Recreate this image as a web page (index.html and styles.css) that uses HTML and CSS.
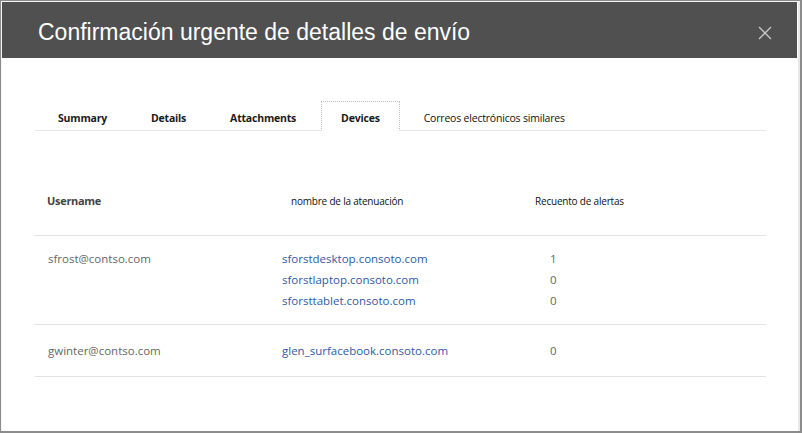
FILE: index.html
```html
<!DOCTYPE html>
<html>
<head>
<meta charset="utf-8">
<link rel="stylesheet" href="styles.css">
</head>
<body>
<div class="window">
  <div class="dialog">
    <div class="main">
      <header class="titlebar">
        <h1 class="title">Confirmación urgente de detalles de envío</h1>
        <button class="close" aria-label="Cerrar">
          <svg width="14" height="14" viewBox="0 0 14 14"><path d="M1 1 L13 13 M13 1 L1 13" stroke="#c8c8c8" stroke-width="1.3" fill="none"/></svg>
        </button>
      </header>
      <div class="content">
        <nav class="tabs">
          <span class="tab bold">Summary</span>
          <span class="tab bold">Details</span>
          <span class="tab bold">Attachments</span>
          <span class="tab bold active">Devices</span>
          <span class="tab">Correos electrónicos similares</span>
        </nav>
        <div class="table">
          <div class="row head">
            <div class="c1 h-user">Username</div>
            <div class="c2 h-dev">nombre de la atenuación</div>
            <div class="c3 h-count">Recuento de alertas</div>
          </div>
          <div class="row">
            <div class="c1 user">sfrost@contso.com</div>
            <div class="c2 links">
              <a>sforstdesktop.consoto.com</a>
              <a>sforstlaptop.consoto.com</a>
              <a>sforsttablet.consoto.com</a>
            </div>
            <div class="c3 counts">
              <span>1</span><span>0</span><span>0</span>
            </div>
          </div>
          <div class="row">
            <div class="c1 user">gwinter@contso.com</div>
            <div class="c2 links">
              <a>glen_surfacebook.consoto.com</a>
            </div>
            <div class="c3 counts">
              <span>0</span>
            </div>
          </div>
        </div>
      </div>
    </div>
    <div class="scrollbar"></div>
  </div>
</div>
</body>
</html>
```

FILE: styles.css
```css
* { box-sizing: border-box; }
html, body { margin: 0; padding: 0; background: #fff; }
body { width: 802px; height: 433px; overflow: hidden; font-family: "Open Sans", "Noto Sans", sans-serif; }

.window {
  width: 802px;
  height: 433px;
  border: 1px solid #8c8c8c;
  border-right-width: 2px;
  border-bottom-width: 2px;
  padding: 1px 0 0 1px;
  background: #f4f4f4;
}
.dialog {
  display: flex;
  height: 100%;
  background: #fff;
}
.main { flex: 1; display: flex; flex-direction: column; }
.scrollbar {
  width: 3px;
  border-left: 1px solid #fff;
  background: #e8e8e8;
}

.titlebar {
  height: 56px;
  background: #505050;
  display: flex;
  align-items: center;
  justify-content: space-between;
  padding: 0 25px 0 36px;
}
.title {
  margin: 0;
  color: #fff;
  font-family: "Liberation Sans", Arial, sans-serif;
  font-weight: normal;
  font-size: 23px;
  line-height: 1;
  padding-top: 4px;
}
.close {
  border: 0;
  background: none;
  padding: 0;
  width: 14px;
  height: 14px;
  display: flex;
  margin-top: 6px;
}

.content { padding: 43px 31px 0 33px; }

.tabs {
  display: flex;
  border-bottom: 1px solid #e6e6e6;
  height: 30px;
}
.tab {
  font-size: 10.5px;
  color: #111;
  padding: 2px 21px 0;
  border: 1px solid transparent;
  border-bottom: 0;
  line-height: 28px;
  letter-spacing: -0.2px;
}
.tab:first-child { padding-left: 22px; }
.tab.bold { font-weight: bold; color: #1a1a1a; }
.tab.active {
  border: 1px dotted #bdbdbd;
  border-bottom: 1px solid #fff;
  margin-bottom: -1px;
  padding: 2px 19px 0;
  margin-left: 3px;
  margin-right: 2px;
}

.row {
  display: grid;
  grid-template-columns: 247px 253px 1fr;
  border-bottom: 1px solid #e3e3e3;
  padding: 12px 0 13px;
  font-size: 11.5px;
  line-height: 21px;
}
.row:last-child { padding: 15px 0 15px; }
.row.head {
  padding: 63px 0 27px;
  line-height: 14px;
  font-size: 10px;
}
.h-user { padding-left: 12px; font-weight: bold; color: #444; font-size: 11px; letter-spacing: -0.3px; }
.h-dev { padding-left: 9px; color: #111; letter-spacing: -0.2px; }
.h-count { color: #111; letter-spacing: -0.2px; }

.user { padding-left: 13px; color: #666; }
.links { display: flex; flex-direction: column; }
.links a { color: #2f5aa8; text-decoration: none; }
.counts { display: flex; flex-direction: column; padding-left: 15px; color: #666; }
```
